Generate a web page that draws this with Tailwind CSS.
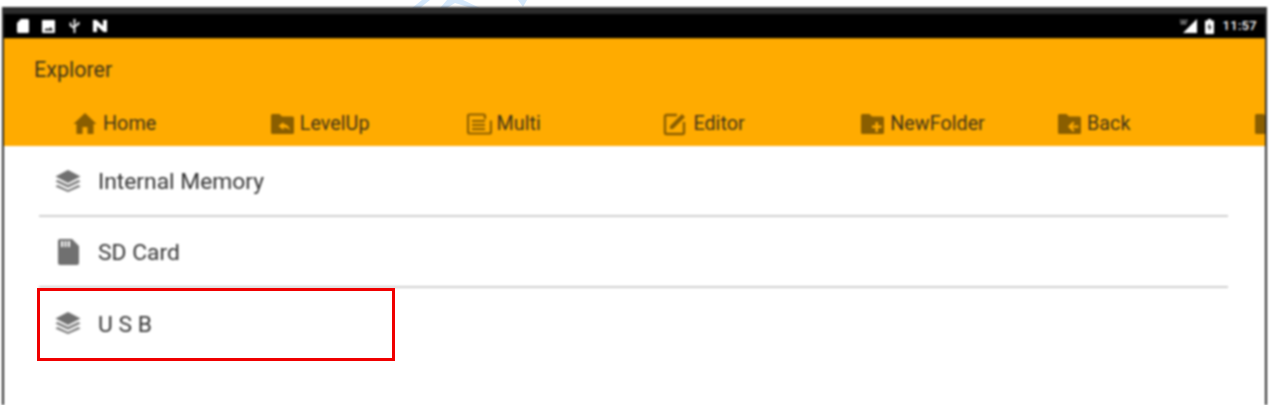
<!DOCTYPE html>
<html lang="en">
<head>
  <meta charset="UTF-8">
  <title>Explorer</title>
  <script src="https://cdn.jsdelivr.net/npm/@tailwindcss/browser@4"></script>
</head>
<body class="bg-white h-[405px] w-[1270px] overflow-hidden font-['Roboto',sans-serif]">
  <div class="relative h-[405px] pt-[7px]">
    <!-- Watermark peeking out above the frame -->
    <svg class="absolute left-[405px] top-0 w-[130px] h-[8px]" viewBox="0 0 130 8" fill="#d5e8fb">
      <path d="M7 8L17 0h8L15 8zM42 0h16l17 8h-9L50 3l-8 5h-7zM113 0h9l-4 7z"/>
    </svg>

    <div class="relative ml-[2px] mr-[3px] h-[398px] border-x-2 border-t border-[#2e2e2e] overflow-hidden blur-[0.8px]">
      <!-- Status bar -->
      <div class="h-[6px] bg-[#2b2b2b]"></div>
      <div class="h-[24px] bg-black flex items-center justify-between pl-[13px] pr-[8px] text-white">
        <div class="flex items-center">
          <svg class="w-[12px] h-[14px]" viewBox="0 0 12 14" fill="currentColor"><path d="M4 0h6.500A1.500 1.500 0 0 1 12 1.500v11a1.500 1.500 0 0 1-1.500 1.500h-9A1.500 1.500 0 0 1 0 12.500V4z"/></svg>
          <svg class="w-[13px] h-[13px] ml-[13px]" viewBox="0 0 13 13" fill="currentColor"><path fill-rule="evenodd" d="M1 0h11a1 1 0 0 1 1 1v11a1 1 0 0 1-1 1H1a1 1 0 0 1-1-1V1a1 1 0 0 1 1-1zM2 10.500h9L8.500 7 6.500 9.500 5 8z"/></svg>
          <svg class="w-[11px] h-[14px] ml-[14px]" viewBox="0 0 11 14" fill="none" stroke="currentColor" stroke-width="1.800"><path d="M5.500 0v14M1.500 3.500v3l4 2.500M9.500 3v2l-4 2.500"/></svg>
          <svg class="w-[14px] h-[12px] ml-[13px]" viewBox="0 0 14 12" fill="currentColor"><path d="M0 0h3.500L10 6V0h4v12h-3.500L4 6v6H0z"/></svg>
        </div>
        <div class="flex items-center">
          <svg class="w-[18px] h-[14px]" viewBox="0 0 18 14" fill="currentColor"><path d="M17 0v14H3z"/><path d="M0 1h1v4h2V1h1v4h2V1h1v1" fill="none" stroke="currentColor" stroke-width=".6"/></svg>
          <svg class="w-[9px] h-[15px] ml-[7px]" viewBox="0 0 9 15" fill="currentColor"><path fill-rule="evenodd" d="M3 0h3v1.500h2a1 1 0 0 1 1 1V14a1 1 0 0 1-1 1H1a1 1 0 0 1-1-1V2.500a1 1 0 0 1 1-1h2zM5 4 2.500 8.500h2L4 12l2.500-4.500h-2z"/></svg>
          <span class="ml-[9px] text-[13px] font-medium tracking-[0.3px]">11:57</span>
        </div>
      </div>

      <!-- App bar -->
      <div class="h-[108px] bg-[#ffab00] border-t border-[#c98a00] flex flex-col text-[#3f3419]">
        <div class="h-[62px] pl-[30px] flex items-center text-[21.500px] leading-none">Explorer</div>
        <div class="flex mt-[11px] pl-[69px] text-[19.800px] leading-none whitespace-nowrap">
          <div class="w-[196.800px] shrink-0 flex items-center gap-[6px]">
            <svg class="w-[24px] h-[24px]" viewBox="0 0 24 24" fill="#8a5e00"><path d="M9.500 22v-7h5v7h6v-10h3L12 1 .5 12h3v10z"/></svg>Home
          </div>
          <div class="w-[196.800px] shrink-0 flex items-center gap-[5px]">
            <svg class="w-[25px] h-[24px]" viewBox="0 0 24 24" fill="#8a5e00"><path fill-rule="evenodd" d="M9 2H2a1.500 1.500 0 0 0-1.500 1.500v17A1.500 1.500 0 0 0 2 22h20a1.500 1.500 0 0 0 1.500-1.500V6A1.500 1.500 0 0 0 22 4.500H11.500zM13 10l-5 4 5 4v-2.500c3 0 5 .7 6.500 3-.500-3.500-2.500-6-6.500-6.500z"/></svg>LevelUp
          </div>
          <div class="w-[196.800px] shrink-0 flex items-center gap-[5px]">
            <svg class="w-[25px] h-[24px]" viewBox="0 0 25 24" fill="none" stroke="#8a5e00" stroke-width="2.200"><path d="M18 7V4a1.500 1.500 0 0 0-1.500-1.500H2.500A1.500 1.500 0 0 0 1 4v16a1.500 1.500 0 0 0 1.500 1.500h20A1.500 1.500 0 0 0 24 20V8.500M5 9h13M5 13h13M5 17h13"/></svg>Multi
          </div>
          <div class="w-[196.800px] shrink-0 flex items-center gap-[6px]">
            <svg class="w-[24px] h-[24px]" viewBox="0 0 24 24" fill="none" stroke="#8a5e00" stroke-width="2.400"><path d="M14 3H3.500A1.500 1.500 0 0 0 2 4.500v16A1.500 1.500 0 0 0 3.500 22h16a1.500 1.500 0 0 0 1.500-1.500V10"/><path d="M7 17v-3L19 2l3 3-12 12z" fill="#8a5e00" stroke="none"/></svg>Editor
          </div>
          <div class="w-[196.800px] shrink-0 flex items-center gap-[5px]">
            <svg class="w-[25px] h-[24px]" viewBox="0 0 24 24" fill="#8a5e00"><path fill-rule="evenodd" d="M9 2H2a1.500 1.500 0 0 0-1.500 1.500v17A1.500 1.500 0 0 0 2 22h20a1.500 1.500 0 0 0 1.500-1.500V6A1.500 1.500 0 0 0 22 4.500H11.500zM15 10h2.500v3.500H21V16h-3.500v4H15v-4h-3.500v-2.500H15z"/></svg>NewFolder
          </div>
          <div class="w-[196.800px] shrink-0 flex items-center gap-[5px]">
            <svg class="w-[25px] h-[24px]" viewBox="0 0 24 24" fill="#8a5e00"><path fill-rule="evenodd" d="M9 2H2a1.500 1.500 0 0 0-1.500 1.500v17A1.500 1.500 0 0 0 2 22h20a1.500 1.500 0 0 0 1.500-1.500V6A1.500 1.500 0 0 0 22 4.500H11.500zM15.500 9.500l1.700 1.500-2.500 2.500H21v2.200h-6.300l2.500 2.600-1.700 1.500-5-5.200z"/></svg>Back
          </div>
          <div class="shrink-0 flex items-center">
            <svg class="w-[25px] h-[24px]" viewBox="0 0 24 24" fill="#8a5e00"><path d="M9 2H2a1.500 1.500 0 0 0-1.500 1.500v17A1.500 1.500 0 0 0 2 22h20a1.500 1.500 0 0 0 1.500-1.500V6A1.500 1.500 0 0 0 22 4.500H11.500z"/></svg>
          </div>
        </div>
      </div>

      <!-- Storage list -->
      <ul class="pl-[35px] pr-[37px] text-[22.800px] text-[#333333]">
        <li class="h-[71px] flex items-center border-b-2 border-[#cfcfcf]">
          <svg class="w-[26px] h-[22px] ml-[16px] mr-[17px]" viewBox="0 0 26 22" fill="#707070"><path d="M13 0l12.500 6.500L13 13 .5 6.500zM2.500 10l10.500 5 10.500-5 2 1.500L13 17.500.5 11.500zM2.500 15l10.500 5 10.500-5 2 1.500L13 22 .5 16.500z"/></svg>
          <span class="pt-[4px]">Internal Memory</span>
        </li>
        <li class="h-[71px] flex items-center border-b-2 border-[#cfcfcf]">
          <svg class="w-[21px] h-[26px] ml-[19px] mr-[19px]" viewBox="0 0 21 26" fill="#707070"><path fill-rule="evenodd" d="M2 0h12l7 7v17a2 2 0 0 1-2 2H2a2 2 0 0 1-2-2V2a2 2 0 0 1 2-2zM3 2v6h2V2zm3.500 0v6h2V2zM10 2v6h2V2z"/></svg>
          <span class="pt-[4px]">SD Card</span>
        </li>
        <li class="h-[70px] flex items-center">
          <svg class="w-[26px] h-[22px] ml-[16px] mr-[17px]" viewBox="0 0 26 22" fill="#707070"><path d="M13 0l12.500 6.500L13 13 .5 6.500zM2.500 10l10.500 5 10.500-5 2 1.500L13 17.500.5 11.500zM2.500 15l10.500 5 10.500-5 2 1.500L13 22 .5 16.500z"/></svg>
          <span class="pt-[4px]">U S B</span>
        </li>
      </ul>
    </div>

    <!-- Red annotation box -->
    <div class="absolute left-[37px] top-[288px] w-[358px] h-[73px] border-[3px] border-[#f00000]"></div>
  </div>
</body>
</html>
